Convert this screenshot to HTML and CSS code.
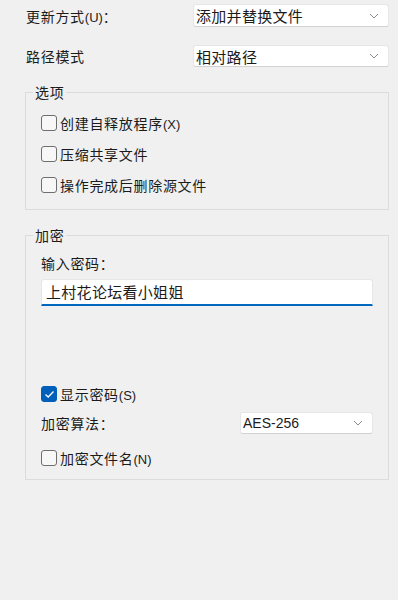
FILE: index.html
```html
<!DOCTYPE html>
<html lang="zh-CN">
<head>
	<meta charset="UTF-8">
	<title>压缩选项</title>
	<link rel="stylesheet" href="styles.css">
</head>
<body>
	<div class="row top">
		<span class="label">更新方式<span class="key">(U)</span>：</span>
		<div class="combo wide">
			<span>添加并替换文件</span>
			<svg class="chev" width="10" height="6" viewBox="0 0 10 6"><polyline points="1,1 5,5 9,1" fill="none" stroke="#8c8c8c" stroke-width="1"/></svg>
		</div>
	</div>
	<div class="row second">
		<span class="label">路径模式</span>
		<div class="combo wide">
			<span>相对路径</span>
			<svg class="chev" width="10" height="6" viewBox="0 0 10 6"><polyline points="1,1 5,5 9,1" fill="none" stroke="#8c8c8c" stroke-width="1"/></svg>
		</div>
	</div>

	<fieldset class="group opts">
		<legend>选项</legend>
		<div class="check"><span class="box"></span><span>创建自释放程序<span class="key">(X)</span></span></div>
		<div class="check"><span class="box"></span><span>压缩共享文件</span></div>
		<div class="check"><span class="box"></span><span>操作完成后删除源文件</span></div>
	</fieldset>

	<fieldset class="group enc">
		<legend>加密</legend>
		<div class="label pw-label">输入密码：</div>
		<div class="input">上村花论坛看小姐姐</div>
		<div class="check show-pw"><span class="box on"><svg width="11" height="9" viewBox="0 0 11 9"><polyline points="1.5,4.5 4.2,7 9.5,1.5" fill="none" stroke="#fff" stroke-width="1.3"/></svg></span><span>显示密码<span class="key">(S)</span></span></div>
		<div class="row algo">
			<span class="label">加密算法：</span>
			<div class="combo small">
				<span class="latin">AES-256</span>
				<svg class="chev" width="10" height="6" viewBox="0 0 10 6"><polyline points="1,1 5,5 9,1" fill="none" stroke="#8c8c8c" stroke-width="1"/></svg>
			</div>
		</div>
		<div class="check"><span class="box"></span><span>加密文件名<span class="key">(N)</span></span></div>
	</fieldset>
</body>
</html>
```
FILE: styles.css
```css
*{margin:0;padding:0;box-sizing:border-box;}
body{
	background: #f0f0f0;
	color: #1b1b1b;
	font-family: "Noto Sans CJK SC", "Liberation Sans", sans-serif;
	font-size: 14px;
	letter-spacing: 0.7px;
	width: 398px;
	height: 600px;
}
.key{
	font-family: "Liberation Sans", sans-serif;
	font-size: 13px;
	letter-spacing: 0;
}
.row{
	display: flex;
	align-items: center;
	justify-content: space-between;
}
.row.top{
	margin: 4px 9px 0 26px;
	height: 23px;
}
.row.second{
	margin: 18px 9px 0 26px;
	height: 22px;
}
.combo{
	display: flex;
	align-items: center;
	justify-content: space-between;
	background: #fff;
	border: 1px solid #e6e6e6;
	border-bottom-color: #d2d2d2;
	border-radius: 3px;
	height: 100%;
	padding: 0 9px 0 2px;
	font-size: 15px;
	letter-spacing: 0.3px;
}
.combo.wide{
	width: 196px;
}
.combo.small{
	width: 133px;
	height: 22px;
}
.latin{
	font-family: "Liberation Sans", sans-serif;
	font-size: 14px;
	letter-spacing: 0;
}
.group{
	border: 1px solid #dcdcdc;
	margin: 0 9px 0 25px;
	padding: 0 15px;
}
.group legend{
	margin-left: -8px;
	padding: 0 2px;
	line-height: 20px;
	font-size: 14px;
}
.opts{
	margin-top: 15px;
	padding-top: 5px;
	padding-bottom: 9px;
}
.enc{
	margin-top: 15px;
	padding-top: 8px;
	padding-bottom: 6px;
}
.check{
	display: flex;
	align-items: center;
	height: 31px;
	gap: 3px;
}
.box{
	width: 16px;
	height: 16px;
	border: 1px solid #6e6e6e;
	border-radius: 3px;
	background: #f7f7f7;
	display: flex;
	align-items: center;
	justify-content: center;
}
.box.on{
	background: #005fb8;
	border-color: #005fb8;
}
.pw-label{
	line-height: 20px;
}
.input{
	margin-top: 6px;
	height: 27px;
	background: #fff;
	border: 1px solid #e6e6e6;
	border-bottom: 2px solid #0067c0;
	border-radius: 3px 3px 0 0;
	padding-left: 4px;
	font-size: 15px;
	line-height: 24px;
	letter-spacing: 0.3px;
}
.show-pw{
	margin-top: 73px;
	height: 30px;
}
.algo{
	height: 28px;
	margin-bottom: 5px;
}
```
